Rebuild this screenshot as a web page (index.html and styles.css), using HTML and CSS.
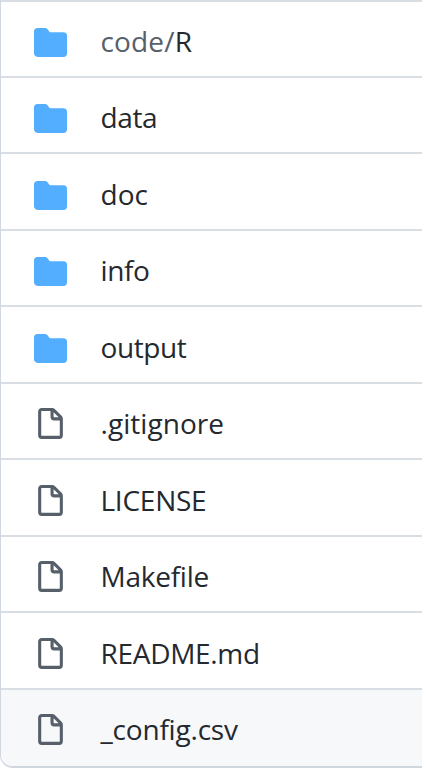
FILE: index.html
```html
<!DOCTYPE html>
<html lang="en">
<head>
<meta charset="utf-8">
<title>Files</title>
<link rel="stylesheet" href="styles.css">
</head>
<body>
<svg class="sprite" aria-hidden="true">
  <symbol id="folder" viewBox="0 0 16 16"><path d="M1.75 1A1.75 1.75 0 0 0 0 2.75v10.5C0 14.216.784 15 1.75 15h12.5A1.75 1.75 0 0 0 16 13.25v-8.5A1.75 1.75 0 0 0 14.25 3h-6.5a.25.25 0 0 1-.2-.1l-.9-1.2c-.33-.44-.85-.7-1.4-.7h-3.5z"/></symbol>
  <symbol id="file" viewBox="0 0 16 16"><path fill-rule="evenodd" d="M3.75 1.5a.25.25 0 0 0-.25.25v11.5c0 .138.112.25.25.25h8.5a.25.25 0 0 0 .25-.25V6H9.75A1.75 1.75 0 0 1 8 4.25V1.5H3.75zm5.75.56v2.19c0 .138.112.25.25.25h2.19L9.5 2.06zM2 1.75C2 .784 2.784 0 3.75 0h5.086c.464 0 .909.184 1.237.513l3.414 3.414c.329.328.513.773.513 1.237v8.086A1.75 1.75 0 0 1 12.25 15h-8.5A1.75 1.75 0 0 1 2 13.25V1.75z"/></symbol>
</svg>
<main class="files">
  <div class="row"><svg class="icon folder"><use href="#folder"/></svg><span class="name n-code"><span class="muted">code/</span>R</span></div>
  <div class="row"><svg class="icon folder"><use href="#folder"/></svg><span class="name n-data">data</span></div>
  <div class="row"><svg class="icon folder"><use href="#folder"/></svg><span class="name n-doc">doc</span></div>
  <div class="row"><svg class="icon folder"><use href="#folder"/></svg><span class="name n-info">info</span></div>
  <div class="row"><svg class="icon folder"><use href="#folder"/></svg><span class="name n-output">output</span></div>
  <div class="row"><svg class="icon"><use href="#file"/></svg><span class="name n-gitignore">.gitignore</span></div>
  <div class="row"><svg class="icon"><use href="#file"/></svg><span class="name n-license">LICENSE</span></div>
  <div class="row"><svg class="icon"><use href="#file"/></svg><span class="name n-makefile">Makefile</span></div>
  <div class="row"><svg class="icon"><use href="#file"/></svg><span class="name n-readme">README.md</span></div>
  <div class="row active"><svg class="icon"><use href="#file"/></svg><span class="name n-config">_config.csv</span></div>
</main>
</body>
</html>
```
FILE: styles.css
```css
* { box-sizing: border-box; }
body { margin: 0; background: #fff; overflow: hidden; }
.sprite { display: none; }
.files {
  height: 768px;
  border-left: 1px solid #d0d7de;
  border-bottom: 2px solid #d0d7de;
  border-bottom-left-radius: 13px;
  overflow: hidden;
  font-family: "Open Sans", "Noto Sans", sans-serif;
  font-size: 28px;
  line-height: 38px;
  color: #24292f;
}
.row {
  display: flex;
  align-items: flex-start;
  height: 76px;
  padding: 24px 0 0 33px;
  border-top: 2px solid #d8dee4;
}
.row:nth-child(odd):not(:first-child) { height: 77px; padding-top: 25px; }
.row.active { height: 78px; background: #f6f8fa; }
.icon { flex: none; width: 33px; height: 33px; margin-right: 34px; fill: #57606a; }
.icon.folder { fill: #54aeff; }
.name { margin: -4px 0 0 -0.5px; white-space: nowrap; letter-spacing: -0.4px; }
.n-code { letter-spacing: 0.15px; }
.n-doc { letter-spacing: 0; }
.n-gitignore { letter-spacing: 0.05px; }
.n-license { letter-spacing: -0.25px; }
.n-makefile { letter-spacing: -0.25px; }
.n-readme { letter-spacing: -0.3px; }
.n-config { letter-spacing: -0.2px; }
.muted { color: #57606a; }
```
